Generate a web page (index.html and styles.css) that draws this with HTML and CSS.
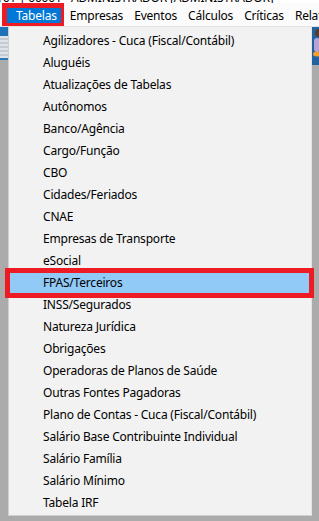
FILE: index.html
```html
<!DOCTYPE html>
<html lang="pt-BR">
<head>
    <meta charset="UTF-8">
    <meta name="viewport" content="width=device-width, initial-scale=1.0">
    <title>Tabelas</title>
    <link rel="stylesheet" href="styles.css">
</head>
<body>
    <div class="screen">
        <!-- Title bar (only the bottom of it is visible) -->
        <div class="titlebar">
            <span class="title-text">161 | 00001 - ADMINISTRADOR [ADMINISTRADOR]</span>
        </div>

        <!-- Menu bar -->
        <div class="menubar">
            <div class="menu-item active"><span>Tabelas</span></div>
            <div class="menu-item">Empresas</div>
            <div class="menu-item">Eventos</div>
            <div class="menu-item">Cálculos</div>
            <div class="menu-item">Críticas</div>
            <div class="menu-item">Relatórios</div>
        </div>

        <div class="workarea">
            <div class="side left">
                <div class="toolbar-blue"></div>
                <div class="toolbar-icons"></div>
            </div>

            <!-- Dropdown menu -->
            <ul class="dropdown">
                <li>Agilizadores - Cuca (Fiscal/Contábil)</li>
                <li>Aluguéis</li>
                <li>Atualizações de Tabelas</li>
                <li>Autônomos</li>
                <li>Banco/Agência</li>
                <li>Cargo/Função</li>
                <li>CBO</li>
                <li>Cidades/Feriados</li>
                <li>CNAE</li>
                <li>Empresas de Transporte</li>
                <li>eSocial</li>
                <li class="selected"><span>FPAS/Terceiros</span></li>
                <li>INSS/Segurados</li>
                <li>Natureza Jurídica</li>
                <li>Obrigações</li>
                <li>Operadoras de Planos de Saúde</li>
                <li>Outras Fontes Pagadoras</li>
                <li>Plano de Contas - Cuca (Fiscal/Contábil)</li>
                <li>Salário Base Contribuinte Individual</li>
                <li>Salário Família</li>
                <li>Salário Mínimo</li>
                <li>Tabela IRF</li>
            </ul>

            <div class="side right">
                <div class="avatar">
                    <svg width="7" height="38" viewBox="0 0 7 38">
                        <rect width="7" height="38" fill="#23609e"/>
                        <circle cx="7" cy="6" r="4" fill="#5a3b2a"/>
                        <rect x="2" y="11" width="6" height="14" rx="3" fill="#b9a3d6"/>
                        <ellipse cx="5" cy="27" rx="4" ry="2.5" fill="#f0a030"/>
                    </svg>
                </div>
            </div>
        </div>
    </div>
</body>
</html>
```

FILE: styles.css
```css
/* General Styling */
body {
    margin: 0;
    padding: 0;
    font-family: 'Noto Sans', 'Open Sans', sans-serif;
    font-size: 12px;
    letter-spacing: -0.2px;
    color: #000;
}
.screen {
    width: 319px;
    height: 521px;
    overflow: hidden;
    background: #ababab;
    display: flex;
    flex-direction: column;
}
.titlebar {
    height: 3px;
    background: #fff;
    overflow: hidden;
    position: relative;
}
.title-text {
    position: absolute;
    left: -4px;
    bottom: -1px;
    font-size: 12px;
    line-height: 12px;
    white-space: nowrap;
}

/* Menu bar */
.menubar {
    height: 24px;
    background: #fbfbfb;
    border-bottom: 1px solid #e3e3e3;
    display: flex;
    align-items: stretch;
    box-sizing: border-box;
    white-space: nowrap;
}
.menu-item {
    padding: 2px 5.5px 0 5.5px;
    display: flex;
    align-items: center;
}
.menu-item.active {
    margin-left: 2px;
    margin-right: 0.5px;
    padding: 0;
    border: solid #ed1c24;
    border-width: 5px 3px 3px 5px;
}
.menu-item.active span {
    background: #0078d7;
    color: #fff;
    height: 100%;
    display: flex;
    align-items: center;
    padding: 0 4px 0 9px;
}

/* Work area */
.workarea {
    flex: 1;
    display: flex;
}
.side {
    width: 8px;
    flex: none;
}
.toolbar-blue {
    height: 9px;
    background: #1f72b8;
}
.toolbar-icons {
    height: 22px;
    background: repeating-linear-gradient(#dfe3e8 0 2px, #c4cad1 2px 4px);
    border-bottom: 2px solid #2b78b8;
}
.side.right {
    width: 7px;
}
.avatar svg {
    display: block;
}

/* Dropdown */
.dropdown {
    list-style: none;
    margin: 0;
    padding: 3px 0 1px;
    width: 302px;
    height: 484px;
    background: #f2f2f2;
    border: 1px solid #cfcfcf;
    border-top: none;
    border-right-color: #e4e4e4;
}
.dropdown li {
    height: 22px;
    line-height: 22px;
    padding-left: 34px;
    white-space: nowrap;
}
.dropdown li.selected {
    padding: 1px 2px 1px 1px;
    height: 20px;
    line-height: 20px;
}
.selected span {
    display: block;
    background: #91c9f7;
    padding-left: 33px;
    outline: 5px solid #ed1c24;
}
```
